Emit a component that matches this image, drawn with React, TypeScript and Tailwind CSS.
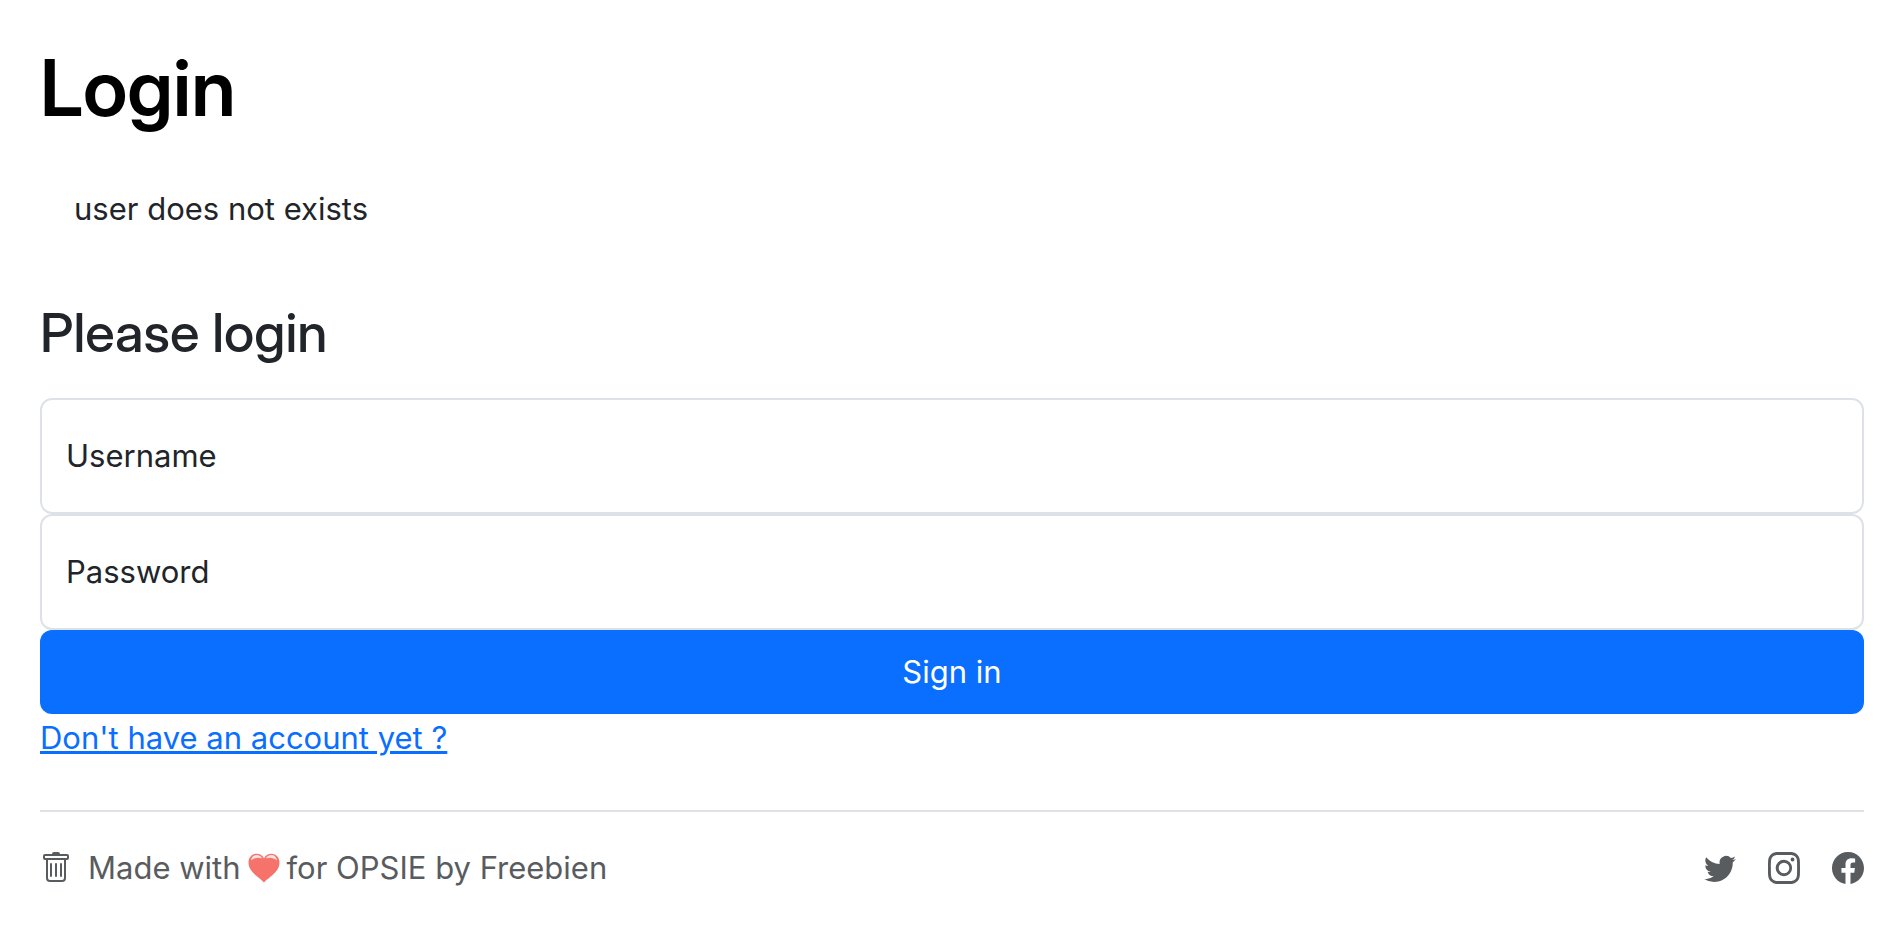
import React from "react";
import { BsTrash, BsTwitter, BsInstagram, BsFacebook } from "react-icons/bs";

function Heart() {
  return (
    <svg viewBox="0 0 32 30" className="h-[30px] w-8 shrink-0" role="img" aria-label="love">
      <path
        d="M16 29.500C12.500 25 0.500 19.500 0.500 9.500C0.500 4.500 4 0.800 8.500 0.800C12 0.800 14.800 2.800 16 5.500C17.200 2.800 20 0.800 23.500 0.800C28 0.800 31.500 4.500 31.500 9.500C31.500 19.500 19.500 25 16 29.500Z"
        fill="#f5736a"
      />
      <path d="M3 7.500C3.500 4 5.500 2 8.500 2C11.200 2 13.200 3.300 14.200 5.500C11 4.200 6.500 4.400 3 7.500Z" fill="#f3e4e3" />
      <path d="M29 7.500C28.500 4 26.500 2 23.500 2C20.800 2 18.800 3.300 17.800 5.500C21 4.200 25.500 4.400 29 7.500Z" fill="#f3e4e3" />
    </svg>
  );
}

type FieldProps = { id: string; label: string; type: string };

function Field({ id, label, type }: FieldProps) {
  return (
    <div className="relative">
      <input
        id={id}
        name={id}
        type={type}
        placeholder=" "
        className="peer block h-[116px] w-full rounded-xl border-2 border-[#dee2e6] bg-white px-6 pt-12 pb-4 outline-none focus:border-[#86b7fe]"
      />
      <label
        htmlFor={id}
        className="pointer-events-none absolute inset-y-0 left-[26px] flex items-center peer-focus:bottom-14 peer-[:not(:placeholder-shown)]:bottom-14"
      >
        {label}
      </label>
    </div>
  );
}

const socials = [
  { name: "Twitter", Icon: BsTwitter },
  { name: "Instagram", Icon: BsInstagram },
  { name: "Facebook", Icon: BsFacebook },
];

export default function App() {
  return (
    <div className="bg-white px-10 font-['Inter','Liberation_Sans',sans-serif] text-[31px] leading-[48px] text-[#212529]">
      <header className="pt-10">
        <h1 className="font-['Inter_Display','Inter',sans-serif] text-[78px] leading-[96px] font-semibold text-black">Login</h1>
      </header>
      <main>
        <p className="mt-[49px] pl-[34px]">user does not exists</p>
        <form onSubmit={(e) => e.preventDefault()}>
          <h2 className="mt-[67px] mb-8 font-['Inter_Display','Inter',sans-serif] text-[54px] leading-[66px] font-medium">Please login</h2>
          <Field id="username" label="Username" type="text" />
          <Field id="password" label="Password" type="password" />
          <button type="submit" className="block h-[84px] w-full rounded-xl bg-[#0a6eff] text-white">
            Sign in
          </button>
          <a href="#signup" className="text-[#0a6eff] underline">
            Don't have an account yet ?
          </a>
        </form>
      </main>
      <footer className="mt-12 flex items-center justify-between border-t-2 border-[#dee2e6] py-8 text-[#595c5f]">
        <div className="flex items-center">
          <a href="#home" aria-label="Home" className="mr-4">
            <BsTrash className="size-8" />
          </a>
          <span className="flex items-center gap-[7px]">
            Made with <Heart /> for OPSIE by Freebien
          </span>
        </div>
        <ul className="flex gap-8">
          {socials.map(({ name, Icon }) => (
            <li key={name}>
              <a href={"#" + name.toLowerCase()} aria-label={name}>
                <Icon className="size-8" />
              </a>
            </li>
          ))}
        </ul>
      </footer>
    </div>
  );
}
